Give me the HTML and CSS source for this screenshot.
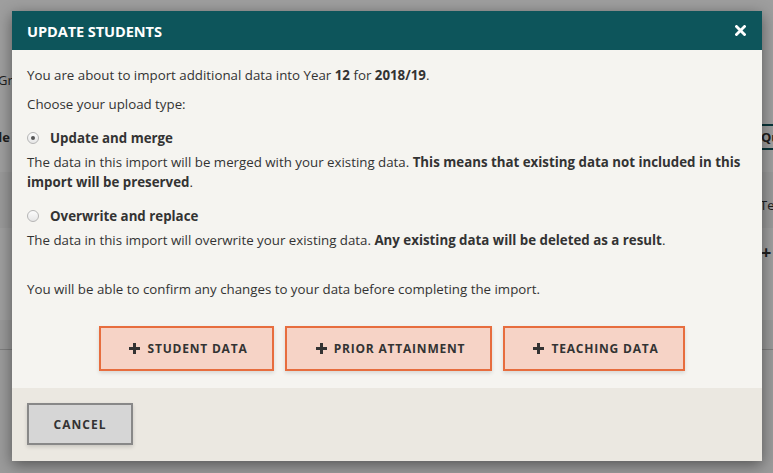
FILE: index.html
```html
<!DOCTYPE html>
<html>
<head>
<meta charset="utf-8">
<link rel="stylesheet" href="styles.css">
</head>
<body>
<div class="page">
  <div class="band b1"><span class="bg-gr">Gr</span><span class="bg-de">de</span><span class="bg-qu">Qu</span></div>
  <div class="band b2"><span class="bg-te">Te</span></div>
  <div class="band b3"><span class="bg-plus">+</span></div>
  <div class="band b4"></div>
  <div class="band b5"></div>
</div>
<div class="overlay"></div>
<div class="modal">
  <div class="modal-header">
    <h1 class="modal-title">UPDATE STUDENTS</h1>
    <button class="close-btn" aria-label="Close">
      <svg width="11" height="11" viewBox="0 0 11 11"><path d="M1.5 1.5 L9.5 9.5 M9.5 1.5 L1.5 9.5" stroke="#fff" stroke-width="2.8" stroke-linecap="square"/></svg>
    </button>
  </div>
  <div class="modal-body">
    <p class="line">You are about to import additional data into Year <b>12</b> for <b>2018/19</b>.</p>
    <p class="line">Choose your upload type:</p>
    <div class="option">
      <label class="option-label"><span class="radio checked"></span>Update and merge</label>
      <p class="option-desc">The data in this import will be merged with your existing data. <b>This means that existing data not included in this import will be preserved</b>.</p>
    </div>
    <div class="option opt2">
      <label class="option-label"><span class="radio"></span>Overwrite and replace</label>
      <p class="option-desc">The data in this import will overwrite your existing data. <b>Any existing data will be deleted as a result</b>.</p>
    </div>
    <p class="confirm">You will be able to confirm any changes to your data before completing the import.</p>
    <div class="actions">
      <button class="add-btn w1"><svg class="plus" width="11" height="11" viewBox="0 0 11 11"><rect x="4" y="0" width="3" height="11" fill="#333"/><rect x="0" y="4" width="11" height="3" fill="#333"/></svg>STUDENT DATA</button>
      <button class="add-btn w2"><svg class="plus" width="11" height="11" viewBox="0 0 11 11"><rect x="4" y="0" width="3" height="11" fill="#333"/><rect x="0" y="4" width="11" height="3" fill="#333"/></svg>PRIOR ATTAINMENT</button>
      <button class="add-btn w3"><svg class="plus" width="11" height="11" viewBox="0 0 11 11"><rect x="4" y="0" width="3" height="11" fill="#333"/><rect x="0" y="4" width="11" height="3" fill="#333"/></svg>TEACHING DATA</button>
    </div>
  </div>
  <div class="modal-footer">
    <button class="cancel-btn">CANCEL</button>
  </div>
</div>
</body>
</html>
```
FILE: styles.css
```css
* { box-sizing: border-box; }
html, body { margin: 0; padding: 0; }
body {
  width: 773px;
  height: 473px;
  overflow: hidden;
  font-family: "Open Sans", "Liberation Sans", sans-serif;
  background: #f4f3ef;
  position: relative;
}
.page { display: flex; flex-direction: column; }
.band { position: relative; }
.b1 { height: 172px; background: #fff; }
.b2 { height: 56px; background: #f7f7f7; }
.b3 { height: 92px; background: #ffffff; }
.b4 { height: 30px; background: #f7f7f7; border-bottom: 1px solid #ccc; }
.b5 { height: 123px; background: #fafafa; }
.bg-gr, .bg-de, .bg-qu, .bg-te, .bg-plus {
  position: absolute; font-size: 13px; color: #333;
}
.bg-gr { left: -2px; top: 71px; }
.bg-de { left: -6px; top: 128px; font-weight: 700; }
.bg-qu { left: 757px; top: 124px; font-weight: 700; border: 2px solid #0d555b; padding: 2px 2px; line-height: 18px; }
.bg-te { left: 760px; top: 24px; }
.bg-plus { left: 761px; top: 12px; font-weight: 700; font-size: 18px; }

.overlay {
  position: absolute; inset: 0;
  background: rgba(0, 0, 0, 0.38);
}

.modal {
  position: absolute;
  left: 12px; top: 11px;
  width: 750px; height: 450px;
  background: #f5f4f0;
  box-shadow: 0 4px 14px rgba(0, 0, 0, 0.45);
  display: flex; flex-direction: column;
}
.modal-header {
  height: 39px;
  background: #0d555b;
  display: flex; align-items: center; justify-content: space-between;
  padding: 0 15px;
}
.modal-title {
  margin: 0;
  color: #fff;
  font-size: 14.6px;
  font-weight: 700;
  letter-spacing: -0.1px;
}
.close-btn {
  border: 0; background: none; padding: 0; margin-right: 1px;
  display: flex; cursor: pointer;
}
.modal-body {
  flex: 1;
  padding: 15px 15px 0;
  color: #333;
  font-size: 13.3px;
  line-height: 20px;
}
.line { margin: 0 0 9px; }
.option { margin-top: 14px; }
.opt2 { margin-top: 14px; }
.option-label {
  display: flex; align-items: center;
  font-weight: 700; font-size: 13.3px;
  margin-bottom: 4px;
}
.radio {
  width: 12px; height: 12px; border-radius: 50%;
  border: 1px solid #b5b5b5;
  background: linear-gradient(#fcfcfc, #e6e6e6);
  margin: 0 11px 0 0;
  display: inline-flex; align-items: center; justify-content: center;
}
.radio.checked::after {
  content: ""; width: 4px; height: 4px; border-radius: 50%; background: #555;
}
.option-desc { margin: 0; }
.confirm { margin: 29px 0 0; }
.actions {
  display: flex; justify-content: center; gap: 11px;
  margin: 27px 0 0 9px;
}
.add-btn {
  height: 45px;
  background: #f6d3c6;
  border: 2px solid #e76d3e;
  color: #333;
  font-family: "Open Sans", "Liberation Sans", sans-serif;
  font-weight: 700;
  font-size: 12px;
  letter-spacing: 0.8px;
  display: flex; align-items: center; justify-content: center;
  box-shadow: 0 2px 4px rgba(0,0,0,0.12);
  padding: 0 0 0 5px;
}
.plus { margin-right: 7px; width: 11px; height: 11px; }
.w1 { width: 175px; }
.w2 { width: 207px; }
.w3 { width: 182px; }
.modal-footer {
  height: 73px;
  background: #ebe8e1;
  padding: 15px 15px 0;
}
.cancel-btn {
  width: 106px; height: 42px;
  background: #d6d6d6;
  border: 2px solid #888;
  color: #333;
  font-family: "Open Sans", "Liberation Sans", sans-serif;
  font-weight: 700;
  font-size: 12px;
  letter-spacing: 1px;
  box-shadow: 0 2px 4px rgba(0,0,0,0.15);
  padding: 0;
}
```
